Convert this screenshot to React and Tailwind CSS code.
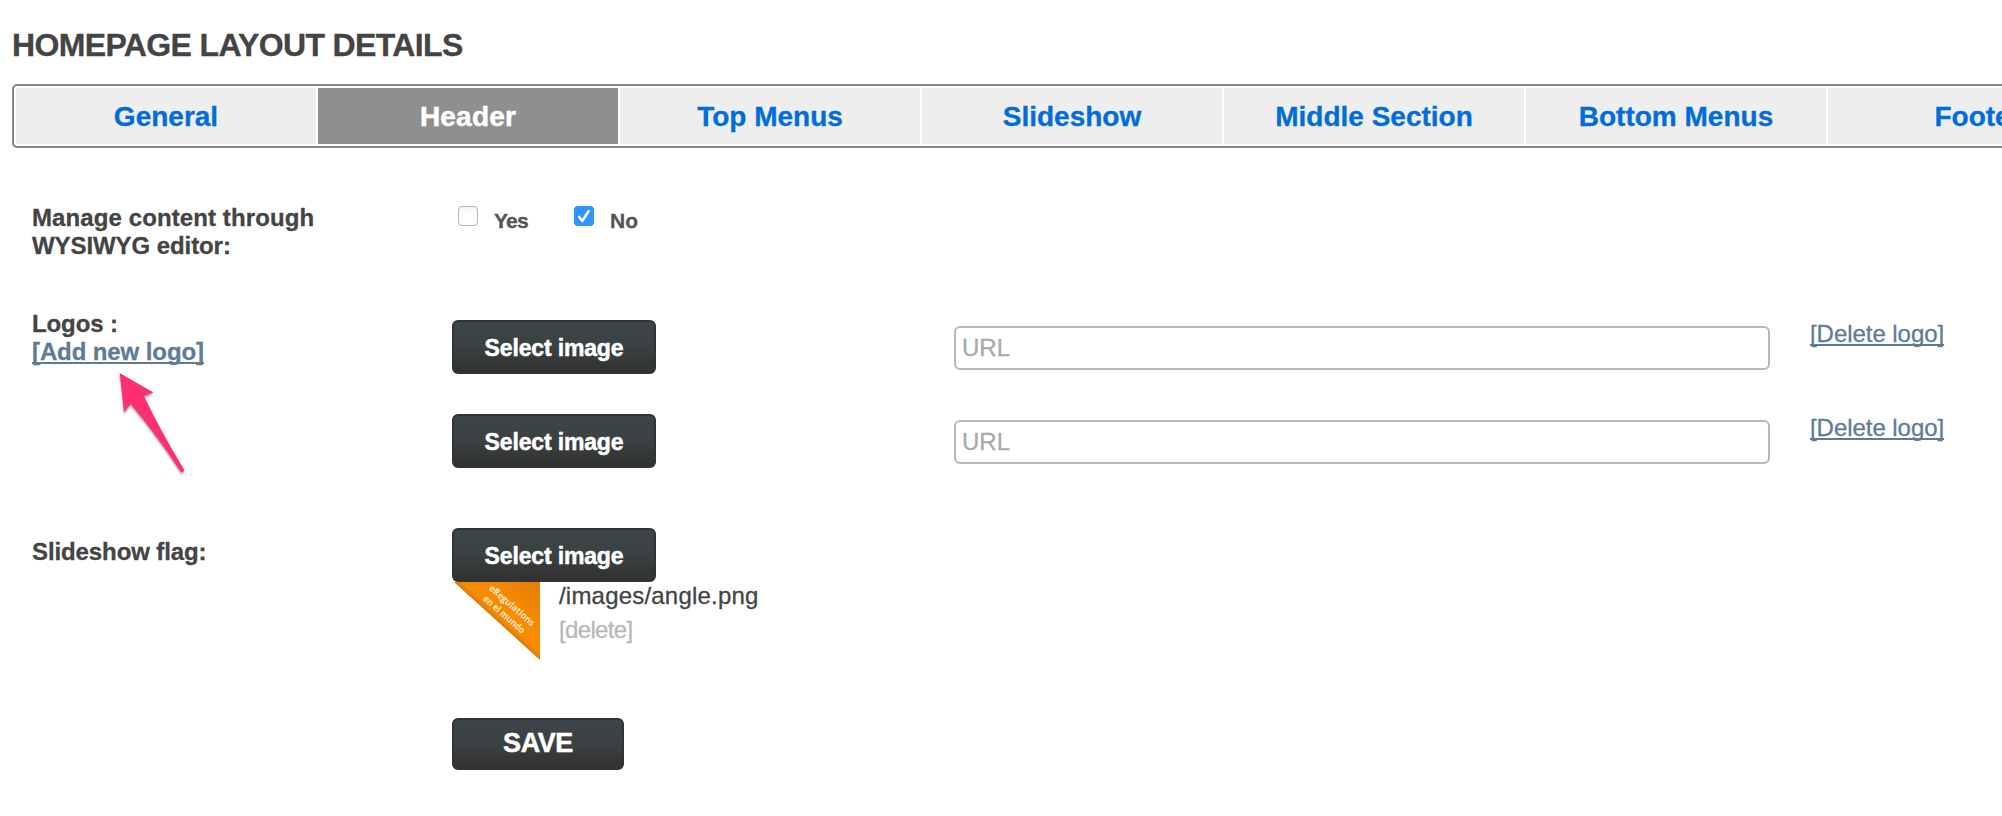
const tabs = [
  { label: 'General' },
  { label: 'Header', active: true },
  { label: 'Top Menus' },
  { label: 'Slideshow' },
  { label: 'Middle Section' },
  { label: 'Bottom Menus' },
  { label: 'Footer' },
];

function SelectButton() {
  return (
    <button className="block h-[54px] w-[204px] shrink-0 rounded-[6px] border-2 border-[#2f3436] bg-linear-to-b from-[#3e4548] via-[#3a4142] to-[#323130] pt-[2px] text-[23px] leading-[48px] font-bold tracking-[-0.15px] text-white [-webkit-text-stroke:0.5px]">
      Select image
    </button>
  );
}

function LogoFields() {
  return (
    <div className="flex items-start">
      <SelectButton />
      <input
        placeholder="URL"
        className="mt-[6px] ml-[298px] h-[44px] w-[816px] rounded-[6px] border-2 border-[#b8b8b8] pl-[6px] text-[24px] text-[#444] placeholder:text-[#a9a9a9] [-webkit-text-stroke:0.3px]"
      />
      <a className="ml-[40px] text-[24px] leading-[28px] tracking-[-0.05px] text-[#5f7b96] underline decoration-2 underline-offset-2 [-webkit-text-stroke:0.3px] [text-decoration-skip-ink:none]">
        [Delete logo]
      </a>
    </div>
  );
}

export default function App() {
  return (
    <div className="relative h-[816px] w-[2002px] overflow-hidden bg-white font-['Liberation_Sans',Arial,sans-serif] text-[#444]">
      <h1 className="h-[84px] pt-[27px] pl-[12px] text-[32px] leading-[36px] font-bold tracking-[-0.63px] [-webkit-text-stroke:0.3px]">
        HOMEPAGE LAYOUT DETAILS
      </h1>
      <nav className="ml-[12px] flex h-[64px] w-[2140px] gap-[2px] rounded-[5px] border-2 border-[#888] py-[2px] pl-[2px]">
        {tabs.map((t) => (
          <a
            key={t.label}
            className={
              t.active
                ? 'h-[56px] w-[300px] shrink-0 bg-[#8f8f8f] pt-px text-center text-[28px] leading-[56px] font-bold tracking-[0.2px] text-white [-webkit-text-stroke:0.5px]'
                : 'h-[56px] w-[300px] shrink-0 bg-[#eee] pt-px text-center text-[28px] leading-[56px] font-bold text-[#006dd9] [-webkit-text-stroke:0.3px]'
            }
          >
            {t.label}
          </a>
        ))}
      </nav>

      <div className="mt-[56px] flex h-[106px] pl-[32px]">
        <div className="w-[420px] text-[24px] leading-[28px] font-bold [-webkit-text-stroke:0.3px]">
          <span className="tracking-[0.1px]">Manage content through</span>
          <br />
          <span className="tracking-[-0.08px]">WYSIWYG editor:</span>
        </div>
        <div className="flex pl-[6px] text-[21px] leading-[28px] font-bold text-[#555]">
          <span className="mt-[2px] size-[20px] rounded-[4px] border-[1.5px] border-[#b8b8b8] bg-linear-to-b from-[#f2f2f2] to-white to-40%" />
          <span className="mt-[3px] ml-[16px] w-[80px] tracking-[-0.8px] [-webkit-text-stroke:0.3px]">Yes</span>
          <span className="mt-[2px] size-[20px] rounded-[4px] bg-[#3293fc]">
            <svg viewBox="0 0 20 20" className="size-[20px]" fill="none" stroke="#fff" strokeWidth="2.4" strokeLinecap="round" strokeLinejoin="round">
              <path d="M5 10.700 8.300 15 14.700 5" />
            </svg>
          </span>
          <span className="mt-[3px] ml-[16px] [-webkit-text-stroke:0.3px]">No</span>
        </div>
      </div>

      <div className="flex h-[218px] pl-[32px]">
        <div className="w-[420px] text-[24px] leading-[28px] font-bold tracking-[-0.1px] [-webkit-text-stroke:0.3px]">
          Logos :
          <br />
          <a className="text-[#5f7b96] underline decoration-2 underline-offset-2 [text-decoration-skip-ink:none]">
            [Add new logo]
          </a>
        </div>
        <div className="flex flex-col gap-[40px] pt-[10px]">
          <LogoFields />
          <LogoFields />
        </div>
      </div>

      <div className="flex h-[190px] pl-[32px]">
        <div className="w-[420px] pt-[10px] text-[24px] leading-[28px] font-bold tracking-[-0.1px] [-webkit-text-stroke:0.3px]">
          Slideshow flag:
        </div>
        <div>
          <SelectButton />
          <div className="flex">
            <svg width="88" height="78" viewBox="0 0 88 78" className="shrink-0">
              <defs>
                <linearGradient id="fold" gradientUnits="userSpaceOnUse" x1="45" y1="39" x2="84" y2="-4">
                  <stop offset="0" stopColor="#d97a08" />
                  <stop offset="0.1" stopColor="#fb8c00" />
                  <stop offset="0.5" stopColor="#f58802" />
                  <stop offset="1" stopColor="#e27d06" />
                </linearGradient>
              </defs>
              <path d="M2 0H88V78Z" fill="url(#fold)" />
              <g fill="#ffe6c8" fontFamily="'Open Sans', sans-serif" fontWeight="700" fontSize="9.5">
                <text transform="translate(36.400 7.200) rotate(41)" textLength="57" lengthAdjust="spacingAndGlyphs">
                  eRegulations
                </text>
                <text transform="translate(30.500 17.800) rotate(41)" textLength="52" lengthAdjust="spacingAndGlyphs">
                  en el mundo
                </text>
              </g>
            </svg>
            <div className="-mt-[3px] ml-[19px] text-[24px] leading-[34px] [-webkit-text-stroke:0.3px]">
              <div className="tracking-[0.2px]">/images/angle.png</div>
              <div className="tracking-[-0.65px] text-[#b8b8b8]">[delete]</div>
            </div>
          </div>
        </div>
      </div>

      <button className="ml-[452px] block h-[52px] w-[172px] rounded-[6px] border-2 border-[#2f3436] bg-linear-to-b from-[#3e4548] via-[#3a4142] to-[#323130] pb-[2px] text-[27px] leading-[44px] font-bold tracking-[-0.4px] text-white [-webkit-text-stroke:0.5px]">
        SAVE
      </button>

      <svg className="absolute top-[368px] left-[114px]" width="76" height="110" viewBox="0 0 76 110">
        <path
          d="M5.700 5 39.500 24.500 30 28Q45 60 70 101.500C70 104 68 105 66.500 103.500Q42 66 16.500 36L10 44.500Z"
          fill="#ff2f70"
          className="drop-shadow-[0_2px_1px_rgba(0,0,0,0.35)]"
        />
      </svg>
    </div>
  );
}
